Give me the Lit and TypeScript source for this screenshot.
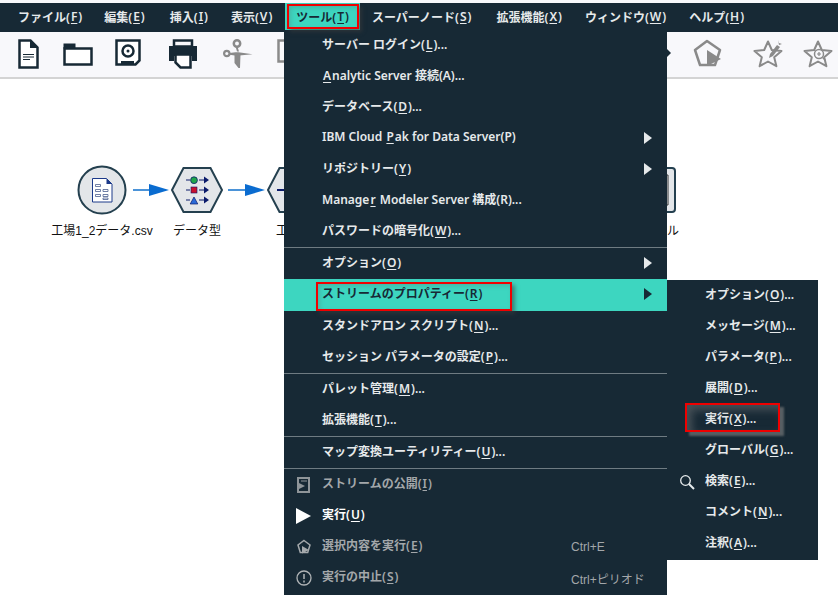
import { LitElement, html, css, svg } from "lit";
import { customElement } from "lit/decorators.js";

type Row = { t: string; icon?: string; short?: string; arrow?: boolean; dis?: boolean; hi?: boolean; strong?: boolean } | "sep";

const barItems = ["ファイル(_F)", "編集(_E)", "挿入(_I)", "表示(_V)", "ツール(_T)", "スーパーノード(_S)", "拡張機能(_X)", "ウィンドウ(_W)", "ヘルプ(_H)"];

const rows: Row[] = [
  { t: "サーバー ログイン(_L)..." },
  { t: "_Analytic Server 接続(A)..." },
  { t: "データベース(_D)..." },
  { t: "IBM Cloud _Pak for Data Server(P)", arrow: true },
  { t: "リポジトリー(_Y)", arrow: true },
  { t: "Manage_r Modeler Server 構成(R)..." },
  { t: "パスワードの暗号化(_W)..." },
  "sep",
  { t: "オプション(_O)", arrow: true },
  { t: "ストリームのプロパティー(_R)", arrow: true, hi: true },
  { t: "スタンドアロン スクリプト(_N)..." },
  { t: "セッション パラメータの設定(_P)..." },
  "sep",
  { t: "パレット管理(_M)..." },
  { t: "拡張機能(_T)..." },
  "sep",
  { t: "マップ変換ユーティリティー(_U)..." },
  "sep",
  { t: "ストリームの公開(_I)", dis: true, icon: "pub" },
  { t: "実行(_U)", icon: "play", strong: true },
  { t: "選択内容を実行(_E)", dis: true, icon: "runsel", short: "Ctrl+E" },
  { t: "実行の中止(_S)", dis: true, icon: "stop", short: "Ctrl+ピリオド" },
];

const sub: Row[] = [
  { t: "オプション(_O)..." },
  { t: "メッセージ(_M)..." },
  { t: "パラメータ(_P)..." },
  { t: "展開(_D)..." },
  { t: "実行(_X)..." },
  { t: "グローバル(_G)..." },
  { t: "検索(_E)...", icon: "search" },
  { t: "コメント(_N)..." },
  { t: "注釈(_A)..." },
];

function mn(t: string) {
  const i = t.indexOf("_");
  if (i < 0) return t;
  return html`${t.slice(0, i)}<u>${t[i + 1]}</u>${t.slice(i + 2)}`;
}

const D = "#172935";
const G = "#8a8a8a";

const menuIcons: Record<string, unknown> = {
  pub: svg`<svg width="16" height="18" viewBox="0 0 16 18"><path d="M2 2h11v14H2z" fill="none" stroke="#8f9599" stroke-width="2"/><path d="M1 6l8 4-8 4z" fill="#8f9599"/><path d="M5 5h6" stroke="#8f9599" stroke-width="1"/></svg>`,
  play: svg`<svg width="16" height="18" viewBox="0 0 16 18"><path d="M0 1l15 8-15 8z" fill="#fff"/></svg>`,
  runsel: svg`<svg width="16" height="16" viewBox="0 0 16 16"><path d="M8 1.500l6 4.500-2.300 7.500H4.300L2 6z" fill="none" stroke="#a5a9ac" stroke-width="1.500"/><path d="M6 7l7 4-7 3.500z" fill="#a5a9ac"/></svg>`,
  stop: svg`<svg width="16" height="16" viewBox="0 0 16 16"><circle cx="8" cy="8" r="7" fill="none" stroke="#b0b4b6" stroke-width="1.300"/><path d="M8 4v5M8 10.500v2" stroke="#b0b4b6" stroke-width="1.500"/></svg>`,
  search: svg`<svg width="16" height="16" viewBox="0 0 16 16"><circle cx="6.500" cy="6.500" r="4.800" fill="none" stroke="#e8ecee" stroke-width="1.300"/><path d="M10 10l5 5" stroke="#e8ecee" stroke-width="2"/></svg>`,
};

const toolbarLeft = html`
  <svg class="ti" style="left:18px" width="21" height="30" viewBox="0 0 21 30"><path d="M1.500 1.500h11l7 7v20h-18z" fill="#fff" stroke="${D}" stroke-width="2.500"/><path d="M12 1.500v7.500h7.500" fill="${D}"/><path d="M5 15.500h11M5 18h11M5 20.500h7" stroke="${D}" stroke-width="1"/></svg>
  <svg class="ti ti-folder" style="left:63px" width="30" height="23" viewBox="0 0 30 23"><path d="M1.500 5.500h27v16h-27z" fill="#fff" stroke="${D}" stroke-width="2.500"/><path d="M0.500 0.500h12v5h-12z" fill="${D}"/></svg>
  <svg class="ti" style="left:115px" width="26" height="27" viewBox="0 0 26 27"><path d="M1.500 1.500h23v20l-4 4h-19z" fill="#fff" stroke="${D}" stroke-width="2.500"/><circle cx="13" cy="12" r="5.500" fill="none" stroke="${D}" stroke-width="2.500"/><circle cx="13" cy="12" r="1.500" fill="${D}"/><path d="M6 25v-3h13v3z" fill="${D}"/></svg>
  <svg class="ti" style="left:169px" width="28" height="30" viewBox="0 0 28 30"><path d="M5 1.500h18v6H5z" fill="none" stroke="${D}" stroke-width="2.500"/><path d="M0 7h28v15h-5v-5H5v5H0z" fill="${D}"/><path d="M6.500 15.500h15v13h-10l-5-5z" fill="#fff" stroke="${D}" stroke-width="2.500"/></svg>
  <svg class="ti" style="left:223px" width="30" height="30" viewBox="0 0 30 30"><circle cx="14" cy="4.500" r="3.200" fill="none" stroke="${G}" stroke-width="2.500"/><circle cx="3.800" cy="14.500" r="2.700" fill="none" stroke="${G}" stroke-width="2.200"/><path d="M6.500 14l6 -.8h3l14 2-16 1.500-7-1z" fill="${G}"/><path d="M12.500 7.500l1.500 5h2l-1.500-5zM11.500 15h6l-.5 14-1.500 0-4-5z" fill="${G}"/></svg>
  <svg class="ti" style="left:277px" width="8" height="24" viewBox="0 0 8 24"><path d="M8 1.500H1.500v21H8" fill="none" stroke="${G}" stroke-width="2.500"/></svg>
`;

const toolbarRight = html`
  <svg class="ti" style="left:667px;top:49px" width="4" height="8" viewBox="0 0 4 8"><path d="M0 0l4 4-4 4z" fill="${D}"/></svg>
  <svg class="ti" style="left:693px" width="30" height="28" viewBox="0 0 30 28"><path d="M14 2l13 9-5 15H7L2 11z" fill="none" stroke="${G}" stroke-width="2.500" stroke-linejoin="round"/><path d="M14 11l14 9-14 7z" fill="${G}"/></svg>
  <svg class="ti" style="left:753px" width="31" height="29" viewBox="0 0 31 29"><path d="M15 2.500l3.800 8.500 9.700 1-7.300 6.200 2.200 9-8.400-4.700-8.400 4.700 2.200-9L1.500 12l9.700-1z" fill="none" stroke="${G}" stroke-width="2" stroke-linejoin="round"/><path d="M17 15l7-9 3 2-7 9-4 2z" fill="${G}"/><path d="M25 1l1 3 3 1-3 1" fill="${G}"/></svg>
  <svg class="ti" style="left:803px" width="31" height="29" viewBox="0 0 31 29"><path d="M15 2.500l3.800 8.500 9.700 1-7.300 6.200 2.200 9-8.400-4.700-8.400 4.700 2.200-9L1.500 12l9.700-1z" fill="none" stroke="${G}" stroke-width="2" stroke-linejoin="round"/><circle cx="16" cy="15" r="4.500" fill="#f8f8fb" stroke="${G}" stroke-width="1.500"/><path d="M14 15h4M16 13v4M19.500 18.500l3 3" stroke="${G}" stroke-width="1.200"/></svg>
`;

const NODE = "#24404f";
const NAVY = "#0a1a6a";
const canvas = svg`
<svg class="flow" width="838" height="528" viewBox="0 77 838 528">
  <circle cx="102" cy="190" r="23.500" fill="#e3e6e9" stroke="${NODE}" stroke-width="2"/>
  <path d="M92.500 178.500h14l5.500 5.500v18h-19.500z" fill="#fff" stroke="#1c3a8a" stroke-width="1"/>
  <path d="M106.500 178.500v5.500h5.500z" fill="#1c3a8a"/>
  <path d="M95.500 184.500h5v2h-5zM95.500 189.500h5v2h-5zM103 189.500h5v2h-5zM95.500 194.500h5v2h-5zM103 194.500h5v2h-5zM103 198h5v1.500h-5z" fill="#fff" stroke="#4c5f8f" stroke-width=".8"/>
  <path d="M133 190h18" stroke="#4b93d8" stroke-width="2"/>
  <path d="M149 184l20 6-20 6z" fill="#0a6cd0"/>
  <path d="M172 190l11.500-22h27l11.500 22-11.500 22h-27z" fill="#e3e6e9" stroke="${NODE}" stroke-width="2"/>
  <circle cx="194" cy="180.200" r="3.400" fill="#1fa64a" stroke="${NAVY}" stroke-width=".8"/>
  <rect x="191" y="187" width="6" height="6" fill="#c8102e" stroke="${NAVY}" stroke-width=".6"/>
  <path d="M194 197l3.800 7h-7.600z" fill="#2a6ad8" stroke="${NAVY}" stroke-width=".7"/>
  <path d="M186 180h4M186 190h4M186 200h4M199 180h8M199 190h8M199 200h8" stroke="${NAVY}" stroke-width="1"/>
  <path d="M204 176.500l5 3.500-5 3.500zM204 186.500l5 3.500-5 3.500zM204 196.500l5 3.500-5 3.500z" fill="${NAVY}"/>
  <path d="M228 190h18" stroke="#4b93d8" stroke-width="2"/>
  <path d="M245 184l20 6-20 6z" fill="#0a6cd0"/>
  <path d="M268 190l11.500-22h27l11.500 22-11.500 22h-27z" fill="#e3e6e9" stroke="${NODE}" stroke-width="2"/>
  <path d="M277 190h10" stroke="${NAVY}" stroke-width="2"/>
  <rect x="640" y="168" width="35" height="44" rx="3" fill="#e3e6e9" stroke="${NODE}" stroke-width="2"/>
  <path d="M660 175h8v30h-8" fill="none" stroke="#333" stroke-width="1"/>
</svg>`;

@customElement("app-root")
export class AppRoot extends LitElement {
  static styles = css`
    :host {
      display: block;
      position: relative;
      width: 838px;
      height: 605px;
      overflow: hidden;
      background: #fff;
      font-family: "Noto Sans", "Noto Sans CJK JP", sans-serif;
    }
    .top { height: 3px; background: #f8f8fb; }
    .bar {
      height: 29px;
      background: #172935;
      display: flex;
      padding-left: 6.5px;
      box-sizing: border-box;
    }
    .bi {
      padding: 0 11.5px 2px;
      display: flex;
      align-items: center;
      color: #e6e9eb;
      font-size: 12px;
      font-weight: 600;
      white-space: nowrap;
    }
    .bi.on { background: #3dd6c0; color: #172935; margin-left: 1px; }
    .bi:nth-child(2) { margin-left: -1px; }
    .bi:nth-child(3) { margin-left: 2px; }
    .bi:nth-child(7) { margin-left: 2px; }
    .tools {
      height: 45px;
      background: #f8f8fb;
      border-bottom: 2px solid #d4d4d4;
    }
    .ti { position: absolute; top: 39px; }
    .ti-folder { top: 43px; }
    .flow { position: absolute; left: 0; top: 77px; }
    .lbl {
      position: absolute;
      font: 12px "Liberation Sans", "Noto Sans CJK JP", sans-serif;
      color: #111;
      white-space: nowrap;
      transform: translateX(-50%);
    }
    .menu {
      position: absolute;
      background: #172935;
      color: #e6e9eb;
      font-size: 12px;
      font-weight: 600;
    }
    .main { left: 284px; top: 30px; width: 383px; height: 565px; }
    .sub { left: 667px; top: 280px; width: 151px; height: 280px; }
    .row {
      height: 31px;
      display: flex;
      align-items: center;
      white-space: nowrap;
      position: relative;
      box-sizing: border-box;
      padding: 0 0 4px 38px;
    }
    .row.hi { background: #3dd6c0; color: #172935; height: 32px; }
    .row.dis { color: #a3a7aa; }
    .row.strong { color: #fff; }
    .ic { position: absolute; left: 12px; top: 50%; transform: translateY(-50%); display: flex; }
    .short {
      position: absolute;
      left: 287px;
      top: 50%;
      transform: translateY(-50%);
      font: 12px "Liberation Sans", "Noto Sans CJK JP", sans-serif;
      color: #a3a7aa;
    }
    .arr {
      position: absolute;
      left: 360px;
      top: 50%;
      margin-top: -7px;
      width: 0;
      height: 0;
      border-left: 8px solid #e6e9eb;
      border-top: 6px solid transparent;
      border-bottom: 6px solid transparent;
    }
    .row.hi .arr { border-left-color: #172935; }
    .sep { height: 1px; background: #6f7b82; }
    .mark {
      position: absolute;
      border: 2px solid #f00000;
      box-sizing: border-box;
      box-shadow: 3px 3px 4px rgba(60, 60, 60, 0.55), inset 2px 2px 4px rgba(90, 90, 90, 0.25);
      pointer-events: none;
    }
    .m1 { left: 287px; top: 4px; width: 72px; height: 25px; }
    .m2 { left: 316px; top: 282px; width: 196px; height: 29px; }
    .m3 {
      left: 685px; top: 403px; width: 95px; height: 29px;
      box-shadow: 4px 4px 2px rgba(130, 130, 130, 0.6), inset 5px 5px 8px rgba(130, 130, 130, 0.45);
    }
    u { margin: 0 1px; text-underline-offset: 2px; text-decoration-thickness: 1px; }
  `;

  private renderRow(r: Row) {
    if (r === "sep") return html`<div class="sep"></div>`;
    const cls = ["row", r.hi ? "hi" : "", r.dis ? "dis" : "", r.strong ? "strong" : ""].join(" ");
    return html`<div class=${cls}>
      ${r.icon ? html`<span class="ic">${menuIcons[r.icon]}</span>` : ""}
      <span>${mn(r.t)}</span>
      ${r.short ? html`<span class="short">${r.short}</span>` : ""}
      ${r.arrow ? html`<span class="arr"></span>` : ""}
    </div>`;
  }

  render() {
    return html`
      <div class="top"></div>
      <div class="bar">
        ${barItems.map((b, i) => html`<div class="bi ${i === 4 ? "on" : ""}">${mn(b)}</div>`)}
      </div>
      <div class="tools"></div>
      ${toolbarLeft} ${toolbarRight} ${canvas}
      <div class="lbl" style="left:102px;top:221px">工場1_2データ.csv</div>
      <div class="lbl" style="left:197px;top:221px">データ型</div>
      <div class="lbl" style="left:282px;top:221px">工</div>
      <div class="lbl" style="left:673px;top:221px">ル</div>
      <div class="menu main">${rows.map((r) => this.renderRow(r))}</div>
      <div class="menu sub">${sub.map((r) => this.renderRow(r))}</div>
      <div class="mark m1"></div>
      <div class="mark m2"></div>
      <div class="mark m3"></div>
    `;
  }
}
